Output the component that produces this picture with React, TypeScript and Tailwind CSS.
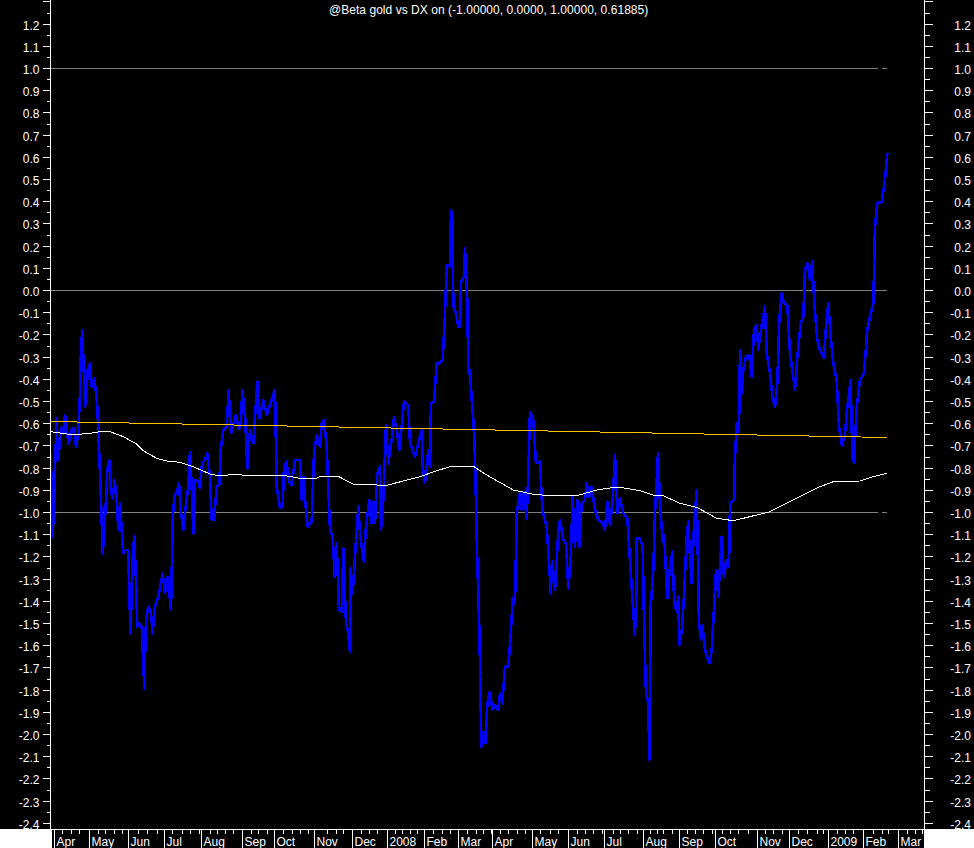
import React from 'react';

type Pt = [number, number];

// points read off 3x crops, origin is the crop's corner
const crop = (ox: number, oy: number, pts: Pt[]): Pt[] => pts.map(([x, y]) => [ox + x / 3, oy + y / 3]);

const blue: Pt[] = [
  ...crop(0, 320, [[153,400],[156,650],[160,610],[165,445],[170,295],[172,400],[176,420],[180,340],[186,320],[190,340],[195,285],[200,320],[205,370],[212,350],[216,325],[222,325],[228,380],[235,340],[240,220],[243,85],[247,30],[250,110],[255,260],[260,210],[263,150],[270,130],[275,200],[282,175],[288,215],[292,260],[296,360],[303,540],[308,700],[312,650],[318,540],[322,450],[328,420],[332,510],[338,535],[344,480],[350,540],[355,630],[360,550],[365,630],[370,700],[378,690],[385,690],[388,830],[392,940],[397,720],[403,650],[408,780],[412,920],[418,910],[425,920],[430,1030],[433,1105],[438,900],[445,860],[452,870],[458,940],[465,860],[475,830],[488,760],[495,820],[503,770],[513,870],[518,600],[523,530],[532,510],[537,490],[542,570],[550,630],[556,570],[565,500],[570,395],[575,500],[580,640],[585,480],[592,480],[600,505],[606,430],[615,420],[622,400],[630,470],[635,600],[642,600],[650,500],[658,495],[662,390],[670,330],[680,320],[686,210],[693,340],[700,310],[708,285],[716,325],[722,320],[727,210],[735,280],[742,445],[750,330],[760,370],[772,185],[778,295],[790,240],[800,285],[815,240],[825,210],[830,500],[840,565],[848,560],[852,440],[860,425],[865,480],[875,495],[885,420],[900,420],[905,540],[910,470],[917,560],[923,620],[935,605],[942,400],[950,345]]),
  ...crop(320, 200, [[0,740],[5,670],[12,660],[20,740],[25,860],[30,990],[38,1010],[44,1130],[50,1030],[57,1230],[65,1235],[70,1045],[78,1270],[85,1300],[90,1355],[92,1105],[98,1180],[108,1020],[115,920],[120,1000],[125,1040],[132,1085],[137,990],[148,900],[155,970],[160,905],[165,970],[172,820],[180,800],[183,990],[190,900],[198,675],[205,790],[215,720],[222,650],[232,700],[238,750],[245,680],[252,605],[265,615],[270,730],[285,770],[295,730],[305,690],[308,800],[315,850],[325,750],[330,800],[333,610],[342,605],[350,490],[358,490],[368,480],[375,340],[380,195],[390,200],[393,30],[398,60],[400,320],[408,340],[415,380],[420,380],[423,245],[432,230],[435,145],[442,300],[445,520],[450,510],[455,600],[460,660],[465,770],[470,1010],[473,1125],[478,1285],[482,1510],[484,1640],[490,1595],[497,1630],[500,1535],[505,1490],[510,1475],[517,1530],[525,1515],[535,1530],[540,1480],[547,1510],[555,1400],[565,1400],[572,1305],[578,1195],[585,1210],[590,940],[600,880],[605,930],[612,875],[620,955],[625,820],[630,635],[640,660],[648,790],[660,785],[667,930],[680,980],[688,1100],[692,1180],[697,1085],[705,1170],[710,1085],[715,990],[720,960],[730,1020],[738,1030],[745,1165],[752,1080],[758,890],[765,1040],[772,900],[778,1040],[785,910],[795,900],[800,850],[808,890],[815,860],[825,930],[835,960],[845,965],[855,990],[862,905],[870,975],[878,900],[885,765],[892,940]]),
  ...crop(620, 480, [[0,55],[10,100],[22,115],[28,210],[35,320],[40,400],[45,465],[50,300],[50,175],[60,175],[68,200],[72,420],[78,640],[85,670],[88,840],[92,380],[100,270],[105,100],[114,-81],[120,70],[128,185],[133,165],[137,260],[142,355],[150,260],[157,215],[163,370],[170,395],[175,350],[178,495],[185,455],[192,350],[200,170],[205,125],[210,230],[215,310],[222,140],[230,30],[237,430],[243,480],[247,435],[255,510],[268,550],[275,510],[283,370],[288,270],[295,350],[305,170],[312,290],[320,240],[327,260],[330,70],[342,60],[345,0]]),
  ...crop(640, 140, [[283,1040],[285,950],[290,850],[297,875],[300,630],[305,760],[310,690],[318,650],[328,645],[335,710],[342,570],[350,555],[355,630],[365,555],[375,500],[380,640],[390,700],[398,780],[405,800],[412,730],[418,540],[425,460],[432,490],[442,495],[450,640],[458,700],[465,750],[472,650],[482,550],[490,530],[495,390],[502,370],[510,420],[517,365],[523,490],[532,600],[540,630],[552,655],[558,560],[565,490],[572,590],[580,670],[590,720],[597,860],[606,918],[615,880],[622,800],[632,720],[637,950],[642,968],[650,800],[660,720],[672,700],[682,570],[690,530],[700,490],[705,260],[712,190],[725,185],[735,120],[742,40]]),
];

const white: Pt[] = [
  ...crop(0, 320, [[153,335],[200,342],[235,343],[270,340],[300,335],[330,335],[370,350],[410,372],[430,392],[470,415],[500,423],[540,427],[580,440],[630,462],[660,468],[700,463],[760,468],[850,466],[900,475],[950,475]]),
  ...crop(320, 200, [[0,829],[55,829],[100,853],[200,856],[300,830],[350,812],[395,799],[460,799],[500,825],[580,870],[640,883],[700,888],[770,887],[830,870],[890,861]]),
  ...crop(620, 480, [[0,22],[60,32],[100,45],[130,47],[180,70],[230,82],[290,115],[340,122],[370,115],[450,95],[500,70],[600,20],[640,5],[720,3]]),
  ...crop(640, 140, [[700,1010],[742,1000]]),
];

const months: { x: number; label: string; ticks: number[] }[] = [
  { x: 54, label: 'Apr', ticks: [62, 71, 79] },
  { x: 89, label: 'May', ticks: [98, 105, 114, 122] },
  { x: 128, label: 'Jun', ticks: [138, 147, 157] },
  { x: 164, label: 'Jul', ticks: [172, 182, 190, 199] },
  { x: 201, label: 'Aug', ticks: [210, 217, 225, 233] },
  { x: 242, label: 'Sep', ticks: [251, 258, 267] },
  { x: 274, label: 'Oct', ticks: [283, 292, 300, 308] },
  { x: 314, label: 'Nov', ticks: [327, 336, 343] },
  { x: 352, label: 'Dec', ticks: [361, 369, 377] },
  { x: 387, label: '2008', ticks: [395, 402, 410, 417] },
  { x: 424, label: 'Feb', ticks: [433, 442, 450] },
  { x: 458, label: 'Mar', ticks: [467, 476, 483, 491] },
  { x: 492, label: 'Apr', ticks: [500, 508, 517, 525] },
  { x: 532, label: 'May', ticks: [540, 550, 558] },
  { x: 568, label: 'Jun', ticks: [577, 585, 593, 602] },
  { x: 604, label: 'Jul', ticks: [613, 620, 628, 637] },
  { x: 643, label: 'Aug', ticks: [650, 657, 663, 672] },
  { x: 679, label: 'Sep', ticks: [687, 695, 703, 712] },
  { x: 715, label: 'Oct', ticks: [722, 730, 738, 748] },
  { x: 757, label: 'Nov', ticks: [765, 773, 782] },
  { x: 789, label: 'Dec', ticks: [798, 807, 817, 823] },
  { x: 828, label: '2009', ticks: [837, 845, 853] },
  { x: 863, label: 'Feb', ticks: [873, 882, 888] },
  { x: 898, label: 'Mar', ticks: [907, 915, 922] },
];

const yOf = (v: number) => Math.floor(290.5 - 222 * v) + 0.5;

// 1.3 down to -2.4 in tenths
const tenths = Array.from({ length: 38 }, (_, i) => (13 - i) / 10);

const toPoints = (pts: Pt[]) => pts.map(([x, y]) => x.toFixed(1) + ',' + y.toFixed(1)).join(' ');

const YAxis: React.FC<{ side: 'left' | 'right' }> = ({ side }) => {
  const left = side === 'left';
  const lineX = left ? 50.5 : 0.5;
  return (
    <svg width={left ? 51 : 50} height={829} className="shrink-0 block overflow-visible" shapeRendering="crispEdges">
      <line x1={lineX} x2={lineX} y1={0} y2={829} stroke="#fff" />
      {tenths.map(v => (
        <g key={v}>
          <line x1={left ? 43 : 0} x2={left ? 50 : 9} y1={yOf(v)} y2={yOf(v)} stroke="#fff" />
          {v > -2.4 && (
            <line x1={left ? 47 : 0} x2={left ? 50 : 6} y1={yOf(v - 0.05)} y2={yOf(v - 0.05)} stroke="#fff" />
          )}
          {v < 1.3 && (
            <text x={left ? 39.5 : 47} y={yOf(v) + 5} textAnchor="end" fill="#fff" fontSize={12}>
              {v.toFixed(1)}
            </text>
          )}
        </g>
      ))}
    </svg>
  );
};

export default function App() {
  return (
    <div className="w-[974px] h-[848px] bg-black flex flex-col overflow-hidden font-['Liberation_Sans',Arial,sans-serif]">
      <div className="flex h-[829px]">
        <YAxis side="left" />
        <svg width={873} height={829} viewBox="51 0 873 829" className="shrink-0 block">
          <g shapeRendering="crispEdges" stroke="#808080">
            <line x1={51} x2={878} y1={68.5} y2={68.5} />
            <line x1={882} x2={887} y1={68.5} y2={68.5} />
            <line x1={51} x2={887} y1={290.5} y2={290.5} />
            <line x1={51} x2={878} y1={512.5} y2={512.5} />
            <line x1={882} x2={887} y1={512.5} y2={512.5} />
          </g>
          <polyline points={toPoints(blue)} fill="none" stroke="#0000ff" strokeWidth={2.6} strokeLinejoin="round" shapeRendering="crispEdges" />
          <line x1={51} x2={887} y1={421.5} y2={437.5} stroke="#ffc000" shapeRendering="crispEdges" />
          <polyline points={toPoints(white)} fill="none" stroke="#fff" shapeRendering="crispEdges" />
          <text x={329} y={14} fill="#fff" fontSize={12} letterSpacing={0.04}>@Beta gold vs DX on (-1.00000, 0.0000, 1.00000, 0.61885)</text>
        </svg>
        <YAxis side="right" />
      </div>
      <div className="flex h-[19px]">
        <div className="w-[51px] bg-white" />
        <svg width={873} height={19} viewBox="51 829 873 19" className="shrink-0 block">
          <g shapeRendering="crispEdges" stroke="#fff">
            <line x1={51} x2={924} y1={829.5} y2={829.5} />
            <line x1={51.5} x2={51.5} y1={829} y2={848} />
            {months.map(m => (
              <g key={m.x}>
                <line x1={m.x + 0.5} x2={m.x + 0.5} y1={829} y2={848} />
                {m.ticks.map(t => (
                  <line key={t} x1={t + 0.5} x2={t + 0.5} y1={829} y2={834} />
                ))}
              </g>
            ))}
          </g>
          {months.map(m => (
            <text key={m.x} x={m.x + 2.5} y={846} fill="#fff" fontSize={12}>{m.label}</text>
          ))}
        </svg>
        <div className="w-[50px] bg-white" />
      </div>
    </div>
  );
}
